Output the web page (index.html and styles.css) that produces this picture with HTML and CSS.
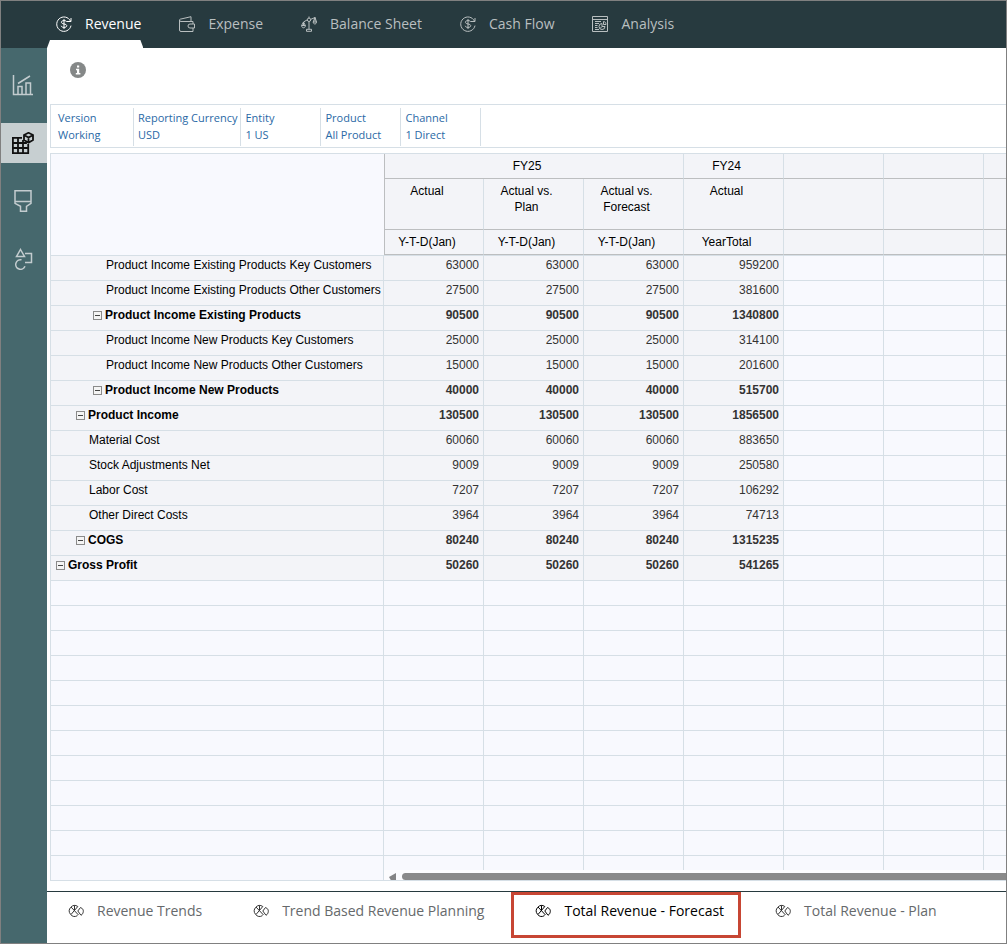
FILE: index.html
```html
<!DOCTYPE html>
<html lang="en">

<head>
    <meta charset="UTF-8">
    <meta name="viewport" content="width=device-width, initial-scale=1.0">
    <title>Revenue</title>
    <link rel="stylesheet" href="styles.css">
</head>

<body>
    <!-- shared icons -->
    <svg class="sprite" aria-hidden="true">
        <symbol id="icon-money" viewBox="0 0 16 16">
            <path d="M14.500 5.200A7.200 7.200 0 1 0 15 9.600M15 2v3.500h-4M10.700 6C10.500 5 9.500 4.600 8 4.600c-1.600 0-2.600.6-2.600 1.700 0 2.400 5.400 1 5.400 3.400 0 1.100-1.200 1.700-2.800 1.700-1.600 0-2.600-.6-2.800-1.600M8 3v10" />
        </symbol>
        <symbol id="icon-pie" viewBox="0 0 16 16">
            <path d="M9.500 12.600A5.400 5.400 0 1 1 9.800 3.500L3 11.500M3 4l7.500 8M6.500 2.700v4.500M12.500 4.500c2 .8 3 2.300 2.800 4-.2 1.800-1 3-2.300 3.800L9.800 8z" />
        </symbol>
    </svg>

    <div class="page">
        <nav class="topbar">
            <a class="top-link active" href="#">
                <svg class="icon"><use href="#icon-money" /></svg>
                Revenue
            </a>
            <a class="top-link" href="#">
                <svg class="icon" viewBox="0 0 16 16"><path d="M11 8h4.500v4H11a2 2 0 0 1 0-4zM14 8V5.500H2A1.500 1.500 0 0 1 .5 4v10A1.500 1.500 0 0 0 2 15.500h12V12M.5 4C.5 3.300 1.300 3 2 3l10-2.300v4.800" /></svg>
                Expense
            </a>
            <a class="top-link" href="#">
                <svg class="icon" viewBox="0 0 16 16"><path d="M8 .5V2M8 5.500V13M5.500 15.300v-2h5v2zM6.300 3.800L2.500 6v3M9.700 3.400L14 1.500v4M.6 9.500h3.800c0 3-3.800 3-3.800 0zM2.500 6L.6 9.500M2.500 6l1.900 3.500M12.200 6h3.300c0 2.600-3.300 2.600-3.300 0zM14 1.500L12.200 6M14 1.500L15.500 6" /><circle cx="8" cy="3.800" r="1.700" /></svg>
                Balance Sheet
            </a>
            <a class="top-link" href="#">
                <svg class="icon"><use href="#icon-money" /></svg>
                Cash Flow
            </a>
            <a class="top-link" href="#">
                <svg class="icon" viewBox="0 0 16 16"><path d="M.5.5h15v15H.5zM.5 3.500h15M3 5.500h6M3 7.500h4M3 9.500h2.500M3 11.500h2.500M3 13.500h4M10 7.500a3 3 0 1 0 3 3h-3zM11.500 5.500v3H14c0-1.700-1-3-2.500-3zM10 10.500l-2 2" /></svg>
                Analysis
            </a>
        </nav>

        <div class="content">
            <aside class="sidebar">
                <button class="side-button" type="button" aria-label="Dashboards">
                    <svg viewBox="0 0 22 22"><path d="M1.500 1v19.500H21M6 20v-7.500h4V20M14 20V9h4.500v11M6 9.500L18 2" /></svg>
                </button>
                <button class="side-button active" type="button" aria-label="Data">
                    <svg viewBox="0 0 22 22"><path d="M10 5.800H.9v15.300h15.300v-9M.9 11h14M.9 16h15.300M6 5.800v15.300M11 8v13" /><path d="M16.500.8l4.500 2.200v5l-4.500 2.700L12 8V3zM12.300 3.200l4.200 2.300L20.700 3.200M16.500 5.500v5" /></svg>
                </button>
                <button class="side-button" type="button" aria-label="Appearance">
                    <svg viewBox="0 0 22 22"><path d="M3 .8h16v12.500l-4.500 3v5h-6v-5l-5.500-3zM3 11.500h16" /></svg>
                </button>
                <button class="side-button" type="button" aria-label="Components">
                    <svg viewBox="0 0 22 22"><path d="M8.500 1.500L12.500 8.500h-8zM13 5.500h6.500v9H13M9.500 11.800a4.800 4.800 0 1 0 3.500 6.500" /></svg>
                </button>
            </aside>

            <main class="main">
                <div class="info-bar">
                    <button class="info-button" type="button" aria-label="Information">
                        <svg viewBox="0 0 16 16"><circle cx="8" cy="8" r="8" /><path d="M7 3.500h2.200v2H7zM6 6.800h3.200v4.200h1.200v1.500H5.800V11H7V8.200H6z" /></svg>
                    </button>
                </div>

                <dl class="pov">
                    <div class="pov-item"><dt>Version</dt><dd>Working</dd></div>
                    <div class="pov-item"><dt>Reporting Currency</dt><dd>USD</dd></div>
                    <div class="pov-item"><dt>Entity</dt><dd>1 US</dd></div>
                    <div class="pov-item"><dt>Product</dt><dd>All Product</dd></div>
                    <div class="pov-item"><dt>Channel</dt><dd>1 Direct</dd></div>
                </dl>

                <div class="grid">
                    <table class="grid-table">
                        <colgroup>
                            <col class="col-name">
                            <col span="7" class="col-value">
                        </colgroup>
                        <thead>
                            <tr class="years">
                                <td class="corner" rowspan="3"></td>
                                <th class="first" colspan="3">FY25</th>
                                <th>FY24</th>
                                <th></th>
                                <th></th>
                                <th></th>
                            </tr>
                            <tr class="scenarios">
                                <th class="first">Actual</th>
                                <th>Actual vs.<br>Plan</th>
                                <th>Actual vs.<br>Forecast</th>
                                <th>Actual</th>
                                <th></th>
                                <th></th>
                                <th></th>
                            </tr>
                            <tr class="periods">
                                <th class="first">Y-T-D(Jan)</th>
                                <th>Y-T-D(Jan)</th>
                                <th>Y-T-D(Jan)</th>
                                <th>YearTotal</th>
                                <th></th>
                                <th></th>
                                <th></th>
                            </tr>
                        </thead>
                        <tbody id="gridRows"></tbody>
                    </table>
                    <div class="scrollbar">
                        <svg class="scroll-arrow" viewBox="0 0 8 8"><path d="M8 0v8H2L0 4.500z" /></svg>
                        <div class="scroll-thumb"></div>
                    </div>
                </div>

                <nav class="bottom-tabs">
                    <a class="bottom-link" href="#"><svg class="icon"><use href="#icon-pie" /></svg>Revenue Trends</a>
                    <a class="bottom-link" href="#"><svg class="icon"><use href="#icon-pie" /></svg>Trend Based Revenue Planning</a>
                    <a class="bottom-link active" href="#"><svg class="icon"><use href="#icon-pie" /></svg>Total Revenue - Forecast</a>
                    <a class="bottom-link" href="#"><svg class="icon"><use href="#icon-pie" /></svg>Total Revenue - Plan</a>
                </nav>
            </main>
        </div>
    </div>

    <script>
        const rows = [
            { name: "Product Income Existing Products Key Customers", level: 3, ytd: 63000, total: 959200 },
            { name: "Product Income Existing Products Other Customers", level: 3, ytd: 27500, total: 381600 },
            { name: "Product Income Existing Products", level: 2, parent: true, ytd: 90500, total: 1340800 },
            { name: "Product Income New Products Key Customers", level: 3, ytd: 25000, total: 314100 },
            { name: "Product Income New Products Other Customers", level: 3, ytd: 15000, total: 201600 },
            { name: "Product Income New Products", level: 2, parent: true, ytd: 40000, total: 515700 },
            { name: "Product Income", level: 1, parent: true, ytd: 130500, total: 1856500 },
            { name: "Material Cost", level: 2, ytd: 60060, total: 883650 },
            { name: "Stock Adjustments Net", level: 2, ytd: 9009, total: 250580 },
            { name: "Labor Cost", level: 2, ytd: 7207, total: 106292 },
            { name: "Other Direct Costs", level: 2, ytd: 3964, total: 74713 },
            { name: "COGS", level: 1, parent: true, ytd: 80240, total: 1315235 },
            { name: "Gross Profit", level: 0, parent: true, ytd: 50260, total: 541265 }
        ];
        const emptyRows = 12;

        const gridRows = document.getElementById('gridRows');

        rows.forEach(row => {
            const tr = document.createElement('tr');
            tr.className = row.parent ? 'parent' : 'leaf';
            const toggle = row.parent ? `<button class="toggle" type="button" aria-label="Collapse ${row.name}"></button>` : '';
            const values = [row.ytd, row.ytd, row.ytd, row.total].map(value => `<td class="value">${value}</td>`).join('');
            tr.innerHTML = `<th class="level-${row.level}" scope="row">${toggle}${row.name}</th>${values}<td></td><td></td><td></td>`;
            gridRows.appendChild(tr);
        });

        for (let i = 0; i < emptyRows; i++) {
            const tr = document.createElement('tr');
            tr.innerHTML = '<td></td>'.repeat(8);
            gridRows.appendChild(tr);
        }
    </script>
</body>

</html>
```
FILE: styles.css
```css
* {
    margin: 0;
    padding: 0;
    box-sizing: border-box;
}

body {
    font-family: "Open Sans", "Noto Sans", sans-serif;
    font-size: 14px;
    background-color: #fff;
}

a {
    color: inherit;
    text-decoration: none;
}

button {
    border: none;
    background: none;
    cursor: pointer;
}

.sprite {
    display: none;
}

.icon {
    width: 16px;
    height: 16px;
    flex: none;
    fill: none;
    stroke: currentColor;
    stroke-width: 1;
}

.page {
    display: flex;
    flex-direction: column;
    min-height: 100vh;
    border: 1px solid #808080;
    overflow: hidden;
}

/* top navigation */
.topbar {
    display: flex;
    gap: 27px;
    height: 47px;
    padding-left: 46px;
    background-color: #273a3f;
    color: #b9bfc0;
}

.top-link {
    position: relative;
    display: flex;
    align-items: center;
    gap: 13px;
    padding: 0 2px 2px 9px;
    font-weight: 500;
    white-space: nowrap;
}

.top-link.active {
    color: #fff;
}

.top-link.active::after {
    content: "";
    position: absolute;
    left: 0;
    right: 0;
    bottom: 0;
    height: 8px;
    background-color: #fff;
    clip-path: polygon(3px 0, calc(100% - 3px) 0, 100% 100%, 0 100%);
}

.content {
    display: flex;
    flex: 1;
}

/* sidebar */
.sidebar {
    display: flex;
    flex-direction: column;
    gap: 18px;
    width: 46px;
    flex: none;
    padding-top: 17px;
    background-color: #46686d;
}

.side-button {
    display: flex;
    align-items: center;
    justify-content: center;
    height: 40px;
    padding-right: 2px;
    color: #c3cccf;
}

.side-button.active {
    background-color: #c7cfd1;
    color: #111;
}

.side-button svg {
    height: 22px;
    width: 22px;
    fill: none;
    stroke: currentColor;
    stroke-width: 1.5;
}

.side-button.active svg {
    stroke-width: 1.8;
}

.main {
    flex: 1;
    min-width: 0;
}

.info-bar {
    height: 56px;
    padding: 14px 23px;
}

.info-button {
    display: block;
    width: 16px;
    height: 16px;
}

.info-button circle {
    fill: #858888;
}

.info-button path {
    fill: #fff;
}

/* point of view bar */
.pov {
    display: flex;
    margin: 0 0 5px 3px;
    padding: 3px 0 1px 3px;
    border: 1px solid #d6dfe6;
    border-right: none;
    font-size: 11px;
    line-height: 17px;
    color: #2a69a6;
}

.pov-item {
    min-width: 80px;
    padding: 1px 3px 3px 4px;
    border-right: 1px solid #d6dfe6;
    white-space: nowrap;
}

/* data grid */
.grid {
    position: relative;
    margin: 0 0 10px 3px;
    border: 1px solid #d6dfe6;
    border-right: none;
    border-bottom: none;
    overflow: hidden;
}

.grid-table {
    width: 1033px;
    table-layout: fixed;
    border-collapse: separate;
    border-spacing: 0;
    font-family: "Liberation Sans", Arial, sans-serif;
    font-size: 12px;
    line-height: 16px;
    color: #000;
}

.col-name {
    width: 333px;
}

.col-value {
    width: 100px;
}

.grid-table th,
.grid-table td {
    border-right: 1px solid #d6dfe6;
    border-bottom: 1px solid #d6dfe6;
    background-color: #f8f9fe;
    font-weight: normal;
    vertical-align: top;
    white-space: nowrap;
}

.grid-table thead th {
    padding: 4px 14px 0 0;
    border-bottom-color: #bcbec0;
    background-color: #f3f4f8;
    text-align: center;
}

.grid-table thead .first {
    border-left: 1px solid #bcbec0;
}

.grid-table thead .corner {
    border-right: none;
    border-bottom: none;
}

.years,
.periods {
    height: 25px;
}

.scenarios {
    height: 51px;
}

.grid-table tbody tr {
    height: 25px;
}

.grid-table tbody tr:first-child {
    height: 26px;
}

.grid-table tbody tr:first-child > * {
    border-top: 1px solid #d6dfe6;
}

.grid-table tbody th {
    padding-top: 1px;
    background-color: #f3f4f8;
    text-align: left;
}

.grid-table .value {
    padding: 1px 4px 0 0;
    background-color: #f3f4f8;
    color: #333;
    text-align: right;
}

.grid-table .parent th,
.grid-table .parent .value {
    font-weight: bold;
}

.grid-table .level-0 {
    padding-left: 5px;
}

.grid-table .level-1 {
    padding-left: 25px;
}

.grid-table .level-2 {
    padding-left: 42px;
}

.grid-table .level-3 {
    padding-left: 55px;
}

.grid-table .leaf .level-2 {
    padding-left: 38px;
}

.toggle {
    width: 9px;
    height: 9px;
    margin-right: 3px;
    border: 1px solid #8a8a8a;
    background: linear-gradient(#444, #444) center / 5px 1px no-repeat #f4f4f4;
}

.scrollbar {
    position: absolute;
    left: 333px;
    right: 0;
    bottom: 0;
    display: flex;
    gap: 6px;
    height: 11px;
    padding: 3px 0 1px 5px;
    border-bottom: 1px solid #d6dfe6;
    background-color: #fcfcfe;
}

.scroll-arrow {
    width: 7px;
    height: 7px;
    fill: #858585;
}

.scroll-thumb {
    flex: 1;
    height: 7px;
    border-radius: 4px 0 0 4px;
    background-color: #8a8a8a;
}

/* bottom tabs */
.bottom-tabs {
    display: flex;
    gap: 16px;
    padding: 3px 0 5px;
    border-top: 1px solid #273a3f;
    color: #66696b;
}

.bottom-link {
    display: flex;
    align-items: center;
    gap: 13px;
    height: 40px;
    padding: 0 14px 9px 21px;
    white-space: nowrap;
}

.bottom-link .icon {
    color: #333;
}

.bottom-link.active {
    outline: 3px solid #c74634;
    color: #000;
}

.bottom-link.active .icon {
    color: #000;
}
```
